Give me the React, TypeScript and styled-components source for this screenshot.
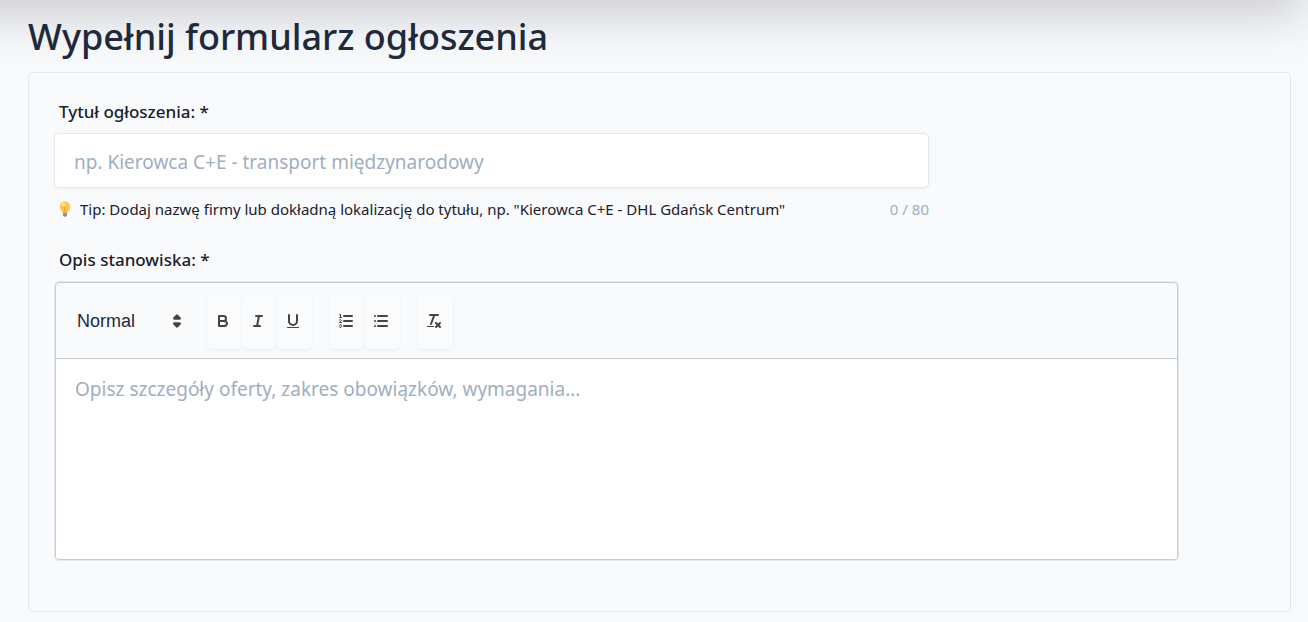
import React, { useState } from "react";
import styled, { createGlobalStyle } from "styled-components";

const GlobalStyle = createGlobalStyle`
  *, *::before, *::after { box-sizing: border-box; }
  body {
    margin: 0;
    background: #f8f9fb;
    color: #1e293b;
    font-family: "Segoe UI", "Noto Sans", "Open Sans", sans-serif;
    font-size: 16px;
  }
  button, input, select, textarea { font: inherit; color: inherit; margin: 0; }
`;

const Page = styled.main`
  position: relative;
  overflow: hidden;
  min-height: 100vh;
  padding: 9px 17px 10px 28px;
`;

const HeaderShadow = styled.div`
  position: absolute;
  left: -80px;
  right: -8px;
  bottom: 100%;
  height: 80px;
  box-shadow: 0 24px 50px -12px rgba(10, 14, 36, 0.21);
  pointer-events: none;
`;

const Title = styled.h1`
  position: relative;
  margin: 0 0 7px;
  font-size: 36px;
  line-height: 56px;
  font-weight: 500;
`;

const Panel = styled.form`
  position: relative;
  min-height: 540px;
  padding: 25px;
  background: #f9fafc;
  border: 1px solid #e2e8f0;
  border-radius: 5px;
`;

const Label = styled.label`
  display: block;
  padding-left: 5px;
  font-size: 17px;
  line-height: 28px;
  font-weight: 500;
  color: #1a202c;
`;

const TitleField = styled.div`
  max-width: 875px;
  margin-bottom: 25px;
`;

const TextInput = styled.input`
  display: block;
  width: 100%;
  height: 55px;
  margin-top: 7px;
  padding: 2px 19px 0;
  font-size: 19px;
  background: #fff;
  border: 1px solid #e2e8f0;
  border-radius: 5px;
  outline: none;
  box-shadow: 0 1px 3px rgba(0, 0, 0, 0.06);
  &::placeholder { color: #a0aec0; opacity: 1; }
`;

const HintRow = styled.div`
  display: flex;
  justify-content: space-between;
  margin-top: 9px;
  font-size: 15px;
  line-height: 24px;
`;

const Tip = styled.span`
  display: flex;
  align-items: center;
  gap: 6px;
  padding-left: 2px;
  color: #1a202c;
`;

const Counter = styled.span`
  color: #a0aec0;
`;

const Editor = styled.div`
  max-width: 1125px;
  margin-top: 7px;
  border: 1px solid #e2e8f0;
  border-radius: 5px;
`;

const EditorFrame = styled.div`
  display: flex;
  flex-direction: column;
  overflow: hidden;
  border: 1px solid #c8cacd;
  border-radius: 4px;
`;

const Toolbar = styled.div`
  display: flex;
  align-items: center;
  gap: 18px;
  height: 76px;
  padding: 0 20px;
  border-bottom: 1px solid #c8cacd;
`;

const Picker = styled.div`
  display: flex;
  align-items: center;
  width: 113px;
`;

const FormatSelect = styled.select`
  flex: 1;
  width: 100%;
  height: 32px;
  margin-right: -28px;
  padding: 0 28px 0 1px;
  font-family: "Liberation Sans", Arial, sans-serif;
  font-size: 18px;
  background: transparent;
  border: 0;
  appearance: none;
  outline: none;
`;

const ButtonGroup = styled.div`
  display: flex;
`;

const ToolButton = styled.button`
  display: flex;
  align-items: center;
  width: 35px;
  height: 56px;
  padding: 0 7px;
  background: #fafbfc;
  border: 0;
  border-radius: 5px;
  box-shadow: 0 1px 3px rgba(0, 0, 0, 0.06);
`;

const Glyph = styled.svg<{ $size?: number }>`
  flex: none;
  width: ${(p) => p.$size ?? 18}px;
  height: ${(p) => p.$size ?? 18}px;
  fill: none;
  stroke: #444;
  stroke-width: 2;
  stroke-linecap: round;
  stroke-linejoin: round;
  pointer-events: none;
  .thin { stroke-width: 1; }
  .fill { fill: #444; stroke: none; }
  .solid { fill: #444; }
`;

const Body = styled.textarea`
  display: block;
  width: 100%;
  height: 200px;
  padding: 15px 19px;
  font-size: 19px;
  line-height: 30px;
  background: #fff;
  border: 0;
  outline: none;
  resize: none;
  &::placeholder { color: #a0aec0; opacity: 1; }
`;

const Bulb = styled.svg`
  width: 18px;
  height: 18px;
`;

type Tool = { name: string; art: React.ReactNode };

const groups: Tool[][] = [
  [
    {
      name: "Pogrubienie",
      art: (
        <>
          <path d="M5,4H9.5A2.5,2.5,0,0,1,12,6.5v0A2.5,2.5,0,0,1,9.5,9H5V4Z" />
          <path d="M5,9h5.5A2.5,2.5,0,0,1,13,11.5v0A2.5,2.5,0,0,1,10.5,14H5V9Z" />
        </>
      ),
    },
    {
      name: "Kursywa",
      art: (
        <>
          <line x1="7" x2="13" y1="4" y2="4" />
          <line x1="5" x2="11" y1="14" y2="14" />
          <line x1="8" x2="10" y1="14" y2="4" />
        </>
      ),
    },
    {
      name: "Podkreślenie",
      art: (
        <>
          <path d="M5,3V9a4.012,4.012,0,0,0,4,4H9a4.012,4.012,0,0,0,4-4V3" />
          <rect className="fill" height="1" rx="0.5" ry="0.5" width="12" x="3" y="15" />
        </>
      ),
    },
  ],
  [
    {
      name: "Lista numerowana",
      art: (
        <>
          <line x1="7" x2="15" y1="4" y2="4" />
          <line x1="7" x2="15" y1="9" y2="9" />
          <line x1="7" x2="15" y1="14" y2="14" />
          <line className="thin" x1="2.5" x2="4.5" y1="5.5" y2="5.5" />
          <path
            className="fill"
            d="M3.5,6A0.5,0.5,0,0,1,3,5.5V3.085l-0.276.138A0.5,0.5,0,0,1,2.053,3c-0.124-.247-0.023-0.324.224-0.447l1-.5A0.5,0.5,0,0,1,4,2.5v3A0.5,0.5,0,0,1,3.5,6Z"
          />
          <path className="thin" d="M4.5,10.5h-2c0-.234,1.85-1.076,1.85-2.234A0.959,0.959,0,0,0,2.5,8.156" />
          <path
            className="thin"
            d="M2.5,14.846a0.959,0.959,0,0,0,1.85-.109A0.7,0.7,0,0,0,3.75,14a0.688,0.688,0,0,0,.6-0.736,0.959,0.959,0,0,0-1.85-.109"
          />
        </>
      ),
    },
    {
      name: "Lista punktowana",
      art: (
        <>
          <line x1="6" x2="15" y1="4" y2="4" />
          <line x1="6" x2="15" y1="9" y2="9" />
          <line x1="6" x2="15" y1="14" y2="14" />
          <line x1="3" x2="3" y1="4" y2="4" />
          <line x1="3" x2="3" y1="9" y2="9" />
          <line x1="3" x2="3" y1="14" y2="14" />
        </>
      ),
    },
  ],
  [
    {
      name: "Wyczyść formatowanie",
      art: (
        <>
          <line x1="5" x2="13" y1="3" y2="3" />
          <line x1="6" x2="9.35" y1="12" y2="3" />
          <line x1="11" x2="15" y1="11" y2="15" />
          <line x1="15" x2="11" y1="11" y2="15" />
          <rect className="fill" height="1" rx="0.5" ry="0.5" width="7" x="2" y="14" />
        </>
      ),
    },
  ],
];

export default function App() {
  const [title, setTitle] = useState("");
  const [description, setDescription] = useState("");

  return (
    <>
      <GlobalStyle />
      <Page>
        <HeaderShadow />
        <Title>Wypełnij formularz ogłoszenia</Title>
        <Panel onSubmit={(e) => e.preventDefault()}>
          <TitleField>
            <Label htmlFor="title">Tytuł ogłoszenia: *</Label>
            <TextInput
              id="title"
              maxLength={80}
              value={title}
              onChange={(e) => setTitle(e.target.value)}
              placeholder="np. Kierowca C+E - transport międzynarodowy"
            />
            <HintRow>
              <Tip>
                <Bulb viewBox="0 0 18 18" aria-hidden="true">
                  <circle cx="9" cy="6.5" r="5.3" fill="#fcc94f" />
                  <path d="M5 9.5h8l-1.8 3.5H6.800z" fill="#fbbd45" />
                  <path d="M7.500 6.500l1 1.500v4M10.500 6.500l-1 1.500" stroke="#f6a23a" fill="none" />
                  <circle cx="7.500" cy="4.500" r="1.800" fill="#ffe59a" />
                  <path d="M7 13h4v2.500l-1 1.200H8l-1-1.200z" fill="#9a86b4" />
                </Bulb>
                Tip: Dodaj nazwę firmy lub dokładną lokalizację do tytułu, np. "Kierowca C+E - DHL Gdańsk Centrum"
              </Tip>
              <Counter>{title.length} / 80</Counter>
            </HintRow>
          </TitleField>

          <Label htmlFor="description">Opis stanowiska: *</Label>
          <Editor>
            <EditorFrame>
              <Toolbar role="toolbar" aria-label="Formatowanie">
                <Picker>
                  <FormatSelect aria-label="Styl tekstu" defaultValue="Normal">
                    <option>Normal</option>
                  </FormatSelect>
                  <Glyph $size={24} viewBox="0 0 18 18" aria-hidden="true">
                    <polygon className="solid" points="7 11 9 13 11 11" />
                    <polygon className="solid" points="7 7 9 5 11 7" />
                  </Glyph>
                </Picker>
                {groups.map((group, i) => (
                  <ButtonGroup key={i}>
                    {group.map((tool) => (
                      <ToolButton key={tool.name} type="button" aria-label={tool.name}>
                        <Glyph viewBox="0 0 18 18" aria-hidden="true">
                          {tool.art}
                        </Glyph>
                      </ToolButton>
                    ))}
                  </ButtonGroup>
                ))}
              </Toolbar>
              <Body
                id="description"
                value={description}
                onChange={(e) => setDescription(e.target.value)}
                placeholder="Opisz szczegóły oferty, zakres obowiązków, wymagania..."
              />
            </EditorFrame>
          </Editor>
        </Panel>
      </Page>
    </>
  );
}
